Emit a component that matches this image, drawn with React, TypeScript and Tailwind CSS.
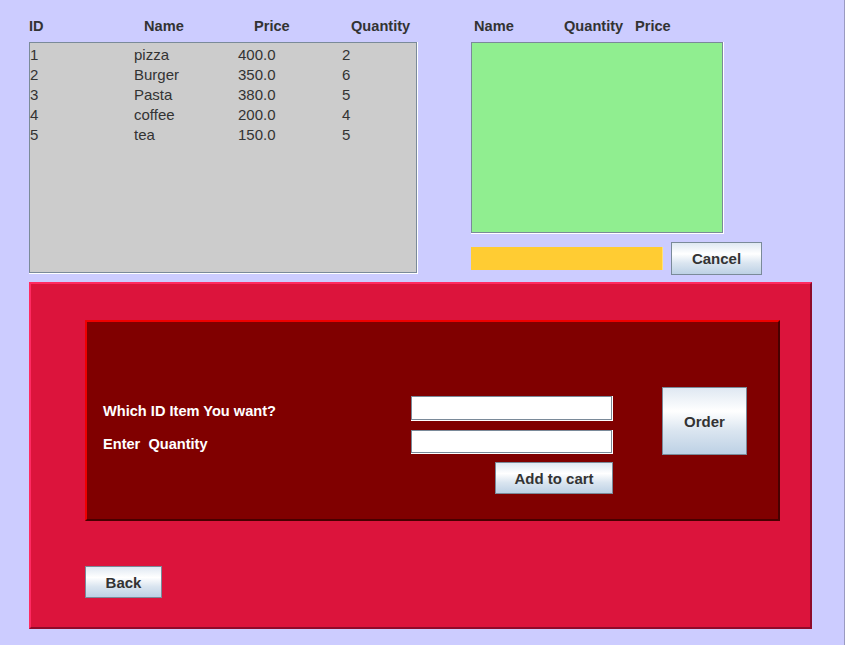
import React from "react";

const font = { fontFamily: '"Liberation Sans", Arial, sans-serif' };

function SwingButton({ label, className }: { label: string; className: string }) {
  return (
    <button
      className={`flex items-center justify-center border border-[#7a8a99] bg-[linear-gradient(to_bottom,#dfe8f2_0%,#ffffff_35%,#dae5f0_65%,#bdd1e5_100%)] pt-[2px] text-[15px] font-bold text-[#333333] ${className}`}
    >
      {label}
    </button>
  );
}

const rows = [
  ["1", "pizza", "400.0", "2"],
  ["2", "Burger", "350.0", "6"],
  ["3", "Pasta", "380.0", "5"],
  ["4", "coffee", "200.0", "4"],
  ["5", "tea", "150.0", "5"],
];

export default function App() {
  return (
    <div
      className="w-[845px] h-[645px] bg-[#ccccff] border-r border-[#9a9ac0] overflow-hidden pl-[29px]"
      style={font}
    >
      <div className="flex h-[274px] items-start">
        {/* Left column: menu table */}
        <div className="w-[389px] flex flex-col">
          <div className="h-[42px] pt-[17px] flex text-[14.6px] font-bold text-[#333333] leading-[18px]">
            <span className="w-[115px]">ID</span>
            <span className="w-[110px]">Name</span>
            <span className="w-[97px]">Price</span>
            <span>Quantity</span>
          </div>
          <div className="h-[232px] w-[389px] border-r border-b border-white">
            <div className="h-full w-full border border-[#7a8a99] bg-[#cccccc] pt-[2px] text-[15px] text-[#333333]">
              {rows.map((r) => (
                <div key={r[0]} className="flex h-[20px] items-center leading-[20px]">
                  <span className="w-[104px]">{r[0]}</span>
                  <span className="w-[104px]">{r[1]}</span>
                  <span className="w-[104px]">{r[2]}</span>
                  <span>{r[3]}</span>
                </div>
              ))}
            </div>
          </div>
        </div>

        {/* Right column: cart */}
        <div className="ml-[53px] flex flex-col">
          <div className="h-[42px] pt-[17px] pl-[3px] flex text-[14.6px] font-bold text-[#333333] leading-[18px]">
            <span className="w-[90px]">Name</span>
            <span className="w-[71px]">Quantity</span>
            <span>Price</span>
          </div>
          <div className="h-[192px] w-[253px] border-r border-b border-white">
            <div className="h-full w-full border border-[#7a8a99] bg-[#90ee90]" />
          </div>
          <div className="mt-[8px] flex items-center gap-[8px]">
            <div className="h-[23px] w-[192px] bg-[#ffcc33] border-r border-[#ffe07a]" />
            <SwingButton label="Cancel" className="w-[91px] h-[33px]" />
          </div>
        </div>
      </div>

      {/* Red order panel */}
      <div className="mt-[8px] w-[783px] h-[347px] bg-[#dc143c] border-2 border-t-[#ff2a62] border-l-[#ff2a62] border-r-[#8f0a2a] border-b-[#8f0a2a] pl-[54px] pt-[36px]">
        <div className="w-[695px] h-[201px] bg-[#800000] border-2 border-t-[#ee0000] border-l-[#ee0000] border-r-[#480000] border-b-[#480000] pl-[16px] pt-[65px] flex items-start">
          <div className="w-[510px] mt-[9px] flex flex-col">
            <div className="flex items-center h-[25px]">
              <span className="w-[308px] pt-[7px] text-[14.6px] font-bold text-white">Which ID Item You want?</span>
              <div className="w-[202px] h-[25px] border-r border-b border-white">
                <div className="h-full w-full border border-[#7a8a99] bg-white" />
              </div>
            </div>
            <div className="flex items-center h-[25px] mt-[8px]">
              <span className="w-[308px] pt-[7px] text-[14.6px] font-bold text-white whitespace-pre">Enter  Quantity</span>
              <div className="w-[202px] h-[24px] border-r border-b border-white">
                <div className="h-full w-full border border-[#7a8a99] bg-white" />
              </div>
            </div>
            <div className="flex justify-end mt-[8px]">
              <SwingButton label="Add to cart" className="w-[118px] h-[32px]" />
            </div>
          </div>
          <SwingButton label="Order" className="ml-[49px] w-[85px] h-[68px]" />
        </div>
        <SwingButton label="Back" className="mt-[45px] w-[77px] h-[32px]" />
      </div>
    </div>
  );
}
